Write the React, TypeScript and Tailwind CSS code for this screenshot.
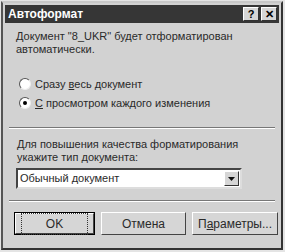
import React from "react";

const font = { fontFamily: '"Liberation Sans", Arial, sans-serif' };

function Radio({ checked }: { checked?: boolean }) {
  return (
    <span className="relative inline-block w-[12px] h-[12px] rounded-full bg-white border border-t-[#555] border-l-[#555] border-r-[#eee] border-b-[#eee] shrink-0">
      {checked && <span className="absolute left-[3px] top-[3px] w-[4px] h-[4px] rounded-full bg-black" />}
    </span>
  );
}

function Btn({ children, def }: { children: React.ReactNode; def?: boolean }) {
  return (
    <div className={`h-[23px] flex items-center justify-center bg-[#d6d6d6] ${def ? "border border-black" : ""}`}>
      <div className="w-full h-full flex items-center justify-center border border-t-white border-l-white border-r-[#444] border-b-[#444]">
        {def ? (
          <span className="px-[24px] py-[1px] border border-dotted border-[#333] text-[12px] text-[#2a2a2a]">{children}</span>
        ) : (
          <span className="text-[12px] text-[#2a2a2a]">{children}</span>
        )}
      </div>
    </div>
  );
}

export default function App() {
  return (
    <div className="w-[285px] h-[252px] bg-[#e4e4e4] overflow-hidden" style={font}>
      <div className="ml-[1px] mt-[1px] w-[282px] h-[249px] bg-[#d2d2d2] border-l-2 border-t-2 border-l-[#555] border-t-[#c8c8c8] border-r-2 border-b-2 border-r-[#333] border-b-[#333] flex flex-col">
        <div className="mx-[2px] mt-[2px] h-[18px] bg-[#363636] flex items-center justify-between pl-[3px] pr-[2px]">
          <span className="text-white font-bold text-[12px] leading-none">Автоформат</span>
          <div className="flex gap-[2px]">
            <div className="w-[16px] h-[14px] bg-[#d6d6d6] border border-t-white border-l-white border-r-[#333] border-b-[#333] flex items-center justify-center text-[11px] font-bold leading-none text-black">?</div>
            <div className="w-[16px] h-[14px] bg-[#d6d6d6] border border-t-white border-l-white border-r-[#333] border-b-[#333] flex items-center justify-center text-[11px] font-bold leading-none text-black">✕</div>
          </div>
        </div>
        <div className="pl-[13px] pt-[7px] text-[11px] leading-[13px] text-[#2a2a2a]">
          <div>Документ "8_UKR" будет отформатирован</div>
          <div>автоматически.</div>
        </div>
        <div className="pl-[16px] pt-[22px] flex flex-col gap-[7px] text-[11px] leading-[12px] text-[#2a2a2a]">
          <div className="flex items-center gap-[4px]">
            <Radio />
            <span>Сразу <u>в</u>есь документ</span>
          </div>
          <div className="flex items-center gap-[4px]">
            <Radio checked />
            <span><u>С</u> просмотром каждого изменения</span>
          </div>
        </div>
        <div className="mx-[6px] mt-[18px] border-t border-t-[#777] border-b border-b-white" />
        <div className="pl-[14px] pt-[9px] text-[11px] leading-[13px] text-[#2a2a2a]">
          <div><u>Д</u>ля повышения качества форматирования</div>
          <div>укажите тип документа:</div>
        </div>
        <div className="ml-[13px] mt-[4px] w-[226px] h-[21px] bg-white border-2 border-t-[#444] border-l-[#444] border-r-[#ddd] border-b-[#ddd] flex items-center">
          <span className="flex-1 pl-[2px] text-[11px] text-[#2a2a2a]">Обычный документ</span>
          <div className="w-[15px] h-[15px] mr-[1px] bg-[#d6d6d6] border border-t-white border-l-white border-r-[#333] border-b-[#333] flex items-center justify-center">
            <svg width="7" height="4" viewBox="0 0 7 4"><path d="M0 0h7L3.5 4z" fill="#111" /></svg>
          </div>
        </div>
        <div className="mx-[6px] mt-[11px] border-t border-t-[#777] border-b border-b-white" />
        <div className="grid grid-cols-[81px_85px_86px] gap-[6px] pl-[11px] pt-[10px]">
          <Btn def>OK</Btn>
          <Btn>Отмена</Btn>
          <Btn>П<u>а</u>раметры...</Btn>
        </div>
      </div>
    </div>
  );
}
